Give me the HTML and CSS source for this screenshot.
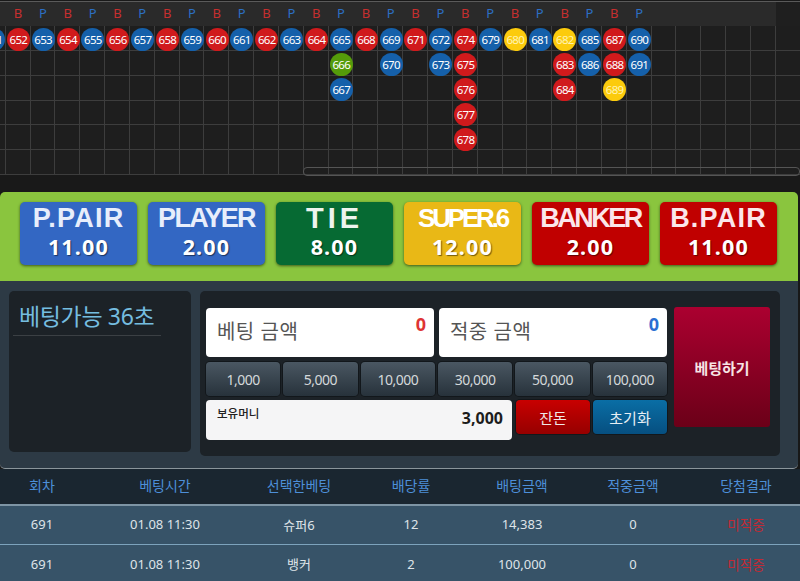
FILE: index.html
```html
<!DOCTYPE html>
<html lang="ko">
<head>
<meta charset="utf-8">
<title>베팅</title>
<link rel="stylesheet" href="styles.css">
</head>
<body>
<section class="road">
  <div class="road-inner">
    <div class="heads">
      <span class="h p">P</span><span class="h b">B</span><span class="h p">P</span><span class="h b">B</span><span class="h p">P</span><span class="h b">B</span><span class="h p">P</span><span class="h b">B</span><span class="h p">P</span><span class="h b">B</span><span class="h p">P</span><span class="h b">B</span><span class="h p">P</span><span class="h b">B</span><span class="h p">P</span><span class="h b">B</span><span class="h p">P</span><span class="h b">B</span><span class="h p">P</span><span class="h b">B</span><span class="h p">P</span><span class="h b">B</span><span class="h p">P</span><span class="h b">B</span><span class="h p">P</span><span class="h b">B</span><span class="h p">P</span>
    </div>
    <div class="board">
      <div class="col"><i class="bead blue">651</i></div>
      <div class="col"><i class="bead red">652</i></div>
      <div class="col"><i class="bead blue">653</i></div>
      <div class="col"><i class="bead red">654</i></div>
      <div class="col"><i class="bead blue">655</i></div>
      <div class="col"><i class="bead red">656</i></div>
      <div class="col"><i class="bead blue">657</i></div>
      <div class="col"><i class="bead red">658</i></div>
      <div class="col"><i class="bead blue">659</i></div>
      <div class="col"><i class="bead red">660</i></div>
      <div class="col"><i class="bead blue">661</i></div>
      <div class="col"><i class="bead red">662</i></div>
      <div class="col"><i class="bead blue">663</i></div>
      <div class="col"><i class="bead red">664</i></div>
      <div class="col"><i class="bead blue">665</i><i class="bead green">666</i><i class="bead blue">667</i></div>
      <div class="col"><i class="bead red">668</i></div>
      <div class="col"><i class="bead blue">669</i><i class="bead blue">670</i></div>
      <div class="col"><i class="bead red">671</i></div>
      <div class="col"><i class="bead blue">672</i><i class="bead blue">673</i></div>
      <div class="col"><i class="bead red">674</i><i class="bead red">675</i><i class="bead red">676</i><i class="bead red">677</i><i class="bead red">678</i></div>
      <div class="col"><i class="bead blue">679</i></div>
      <div class="col"><i class="bead yellow">680</i></div>
      <div class="col"><i class="bead blue">681</i></div>
      <div class="col"><i class="bead yellow">682</i><i class="bead red">683</i><i class="bead red">684</i></div>
      <div class="col"><i class="bead blue">685</i><i class="bead blue">686</i></div>
      <div class="col"><i class="bead red">687</i><i class="bead red">688</i><i class="bead yellow">689</i></div>
      <div class="col"><i class="bead blue">690</i><i class="bead blue">691</i></div>
      <div class="col"></div><div class="col"></div><div class="col"></div><div class="col"></div><div class="col"></div><div class="col"></div><div class="col"></div>
    </div>
  </div>
  <div class="scrollbar"></div>
</section>

<section class="odds">
  <button class="odd o-blue"><b class="odd-name pair">P.PAIR</b><span class="odd-val">11.00</span></button>
  <button class="odd o-blue"><b class="odd-name tight">PLAYER</b><span class="odd-val">2.00</span></button>
  <button class="odd o-green"><b class="odd-name wide">TIE</b><span class="odd-val">8.00</span></button>
  <button class="odd o-yellow"><b class="odd-name super">SUPER.6</b><span class="odd-val">12.00</span></button>
  <button class="odd o-red"><b class="odd-name tighter">BANKER</b><span class="odd-val">2.00</span></button>
  <button class="odd o-red"><b class="odd-name pair">B.PAIR</b><span class="odd-val">11.00</span></button>
</section>

<section class="panel">
  <div class="timer"><h2 class="timer-title">베팅가능 36초</h2></div>
  <div class="bet">
    <div class="bet-main">
      <div class="amounts">
        <div class="amount"><span class="amount-label">베팅 금액</span><b class="amount-num red-num">0</b></div>
        <div class="amount"><span class="amount-label">적중 금액</span><b class="amount-num blue-num">0</b></div>
      </div>
      <div class="chips">
        <button class="chip">1,000</button>
        <button class="chip">5,000</button>
        <button class="chip">10,000</button>
        <button class="chip">30,000</button>
        <button class="chip">50,000</button>
        <button class="chip">100,000</button>
      </div>
      <div class="balance-row">
        <div class="balance"><span class="balance-label">보유머니</span><b class="balance-num">3,000</b></div>
        <button class="act act-red">잔돈</button>
        <button class="act act-blue">초기화</button>
      </div>
    </div>
    <button class="submit">베팅하기</button>
  </div>
</section>

<section class="history">
  <div class="tr th"><span>회차</span><span>베팅시간</span><span>선택한베팅</span><span>배당률</span><span>배팅금액</span><span>적중금액</span><span>당첨결과</span></div>
  <div class="tr td"><span>691</span><span>01.08 11:30</span><span>슈퍼6</span><span>12</span><span>14,383</span><span>0</span><span class="miss">미적중</span></div>
  <div class="tr td"><span>691</span><span>01.08 11:30</span><span>뱅커</span><span>2</span><span>100,000</span><span>0</span><span class="miss">미적중</span></div>
</section>
</body>
</html>
```
FILE: styles.css
```css
* { box-sizing: border-box; }
html, body { margin: 0; height: 581px; overflow: hidden; }
body {
  background: #181818;
  font-family: "Noto Sans", "Noto Sans CJK KR", sans-serif;
  color: #fff;
}
button { font-family: inherit; border: 0; padding: 0; }

/* road */
.road { position: relative; height: 192px; background: #191919; overflow: hidden; }
.road-inner { margin-left: -19.2px; width: 830px; border-top: 1px solid #5a5a5a; margin-top: 1px; }
.heads {
  display: grid;
  grid-template-columns: repeat(27, 24.85px);
  height: 24px;
  background: linear-gradient(#2a2a2a, #2a2a2a) 0 0 / 795px 100% no-repeat, #1f1f1f;
  align-items: center;
}
.h { font-size: 13px; text-align: center; line-height: 24px; margin-top: -2px; }
.h.b { color: #c62f2f; }
.h.p { color: #2c6fc4; }
.board {
  display: grid;
  grid-template-columns: repeat(34, 24.85px);
  height: 149.3px;
  background: repeating-linear-gradient(#1e1e1e 0, #1e1e1e 23.85px, #3d3d3d 23.85px, #3d3d3d 24.85px);
}
.col { display: flex; flex-direction: column; border-right: 1px solid #3d3d3d; padding-top: 2.2px; }
.bead {
  flex: none;
  width: 23px;
  height: 23px;
  margin-bottom: 1.85px;
  margin-left: 1.2px;
  border-radius: 50%;
  font-style: normal;
  font-size: 11.5px;
  letter-spacing: -0.7px;
  line-height: 23px;
  text-align: center;
  color: #fff;
}
.bead.red { background: #d01a1c; }
.bead.blue { background: #1560aa; }
.bead.green { background: #559c0a; }
.bead.yellow { background: #fccb0c; color: #fff3b0; }
.scrollbar {
  position: absolute;
  left: 303px;
  top: 167px;
  width: 497px;
  height: 9px;
  border: 1px solid #555;
  border-radius: 4px;
}

/* odds */
.odds {
  width: 798px;
  height: 89px;
  background: #8ac53e;
  border-radius: 5px 5px 0 0;
  padding: 10px 0 0 20px;
  display: flex;
  gap: 11px;
  align-items: flex-start;
}
.odd {
  width: 117px;
  height: 63px;
  border-radius: 5px;
  color: #fff;
  display: flex;
  flex-direction: column;
  align-items: center;
  box-shadow: 0 1px 3px rgba(0,0,0,.55);
}
.o-blue { background: #3367c3; }
.o-green { background: #066a33; }
.o-yellow { background: #e9b816; }
.o-red { background: #c00000; }
.odd-name {
  font-family: "Liberation Sans", sans-serif;
  font-size: 27px;
  line-height: 30px;
  margin-top: 1px;
  color: #e8eefb;
}
.o-red .odd-name { color: #fbe6ea; }
.o-yellow .odd-name { color: #fff; }
.pair { letter-spacing: 1.2px; }
.tight { letter-spacing: -1.7px; }
.tighter { letter-spacing: -2.5px; }
.super { font-size: 26px; letter-spacing: -3.2px; }
.wide { font-size: 29px; letter-spacing: 4px; color: #eef4ee; }
.odd-val {
  font-weight: 700;
  font-size: 21.5px;
  line-height: 26px;
  margin-top: 1px;
  letter-spacing: 1.2px;
  text-shadow: 1px 1px 1px rgba(0,0,0,.5);
}

/* panel */
.panel {
  width: 798px;
  height: 188px;
  background: #2d3a45;
  border-bottom: 1px solid #8b959b;
  border-radius: 0 0 5px 5px;
  padding: 10px 18px 0 9px;
  display: flex;
  gap: 9px;
  align-items: flex-start;
}
.timer {
  width: 182px;
  height: 161px;
  background: #1c2227;
  border-radius: 5px;
  padding: 12px 0 0 4px;
}
.timer-title {
  margin: 0;
  width: 148px;
  font-size: 23px;
  font-weight: 400;
  line-height: 26px;
  height: 33px;
  padding-left: 6px;
  color: #75bde0;
  border-bottom: 1px solid #3b4044;
  letter-spacing: -0.35px;
  white-space: nowrap;
}
.bet {
  width: 580px;
  height: 165px;
  background: #1c2227;
  border-radius: 5px;
  padding: 16px 10px 0 6px;
  display: flex;
  gap: 7px;
  align-items: flex-start;
}
.bet-main { width: 461px; display: flex; flex-direction: column; }
.amounts { display: flex; gap: 5px; margin-top: 1px; }
.amount {
  flex: 1;
  height: 49px;
  background: #fff;
  border-radius: 4px;
  padding: 0 8px 0 11px;
  display: flex;
  justify-content: space-between;
}
.amount-label {
  font-family: "Noto Sans CJK KR", sans-serif;
  font-size: 20px;
  line-height: 46px;
  color: #555;
  letter-spacing: 0.4px;
}
.amount-num { font-size: 18px; line-height: 20px; margin-top: 6px; }
.red-num { color: #de3434; }
.blue-num { color: #2a6fd2; }
.chips { display: grid; grid-template-columns: repeat(6, 1fr); gap: 3px; margin-top: 5px; }
.chip {
  height: 34px;
  border-radius: 4px;
  font-size: 14px;
  letter-spacing: -0.5px;
  color: #d4d8da;
  background: linear-gradient(#4a5762, #27323b);
  box-shadow: 0 0 0 1px #12171b;
}
.balance-row { display: flex; gap: 3px; margin-top: 4px; align-items: flex-start; }
.balance {
  width: 306px;
  height: 40px;
  margin-right: 1px;
  background: #f5f5f6;
  border-radius: 4px;
  padding: 4px 9px 0 11px;
  display: flex;
  justify-content: space-between;
  color: #222;
}
.balance-label { font-family: "Noto Sans CJK KR", sans-serif; font-size: 11.5px; font-weight: 500; line-height: 18px; }
.balance-num { font-size: 16px; line-height: 28px; color: #1c1c1c; }
.act {
  flex: 1;
  height: 34px;
  border-radius: 4px;
  font-family: "Noto Sans CJK KR", sans-serif;
  font-size: 15px;
  color: #f0e8e8;
  box-shadow: 0 0 0 1px #12171b;
}
.act-red { background: linear-gradient(#c80000, #960000); }
.act-blue { background: linear-gradient(#0a6ea5, #064f80); color: #e6eef4; }
.submit {
  width: 96px;
  height: 120px;
  border-radius: 3px;
  background: linear-gradient(#ab0030, #6b0018);
  color: #f7e4e4;
  font-family: "Noto Sans CJK KR", sans-serif;
  font-size: 15px;
  font-weight: 700;
}

/* history */
.history { background: #1a2630; }
.tr {
  display: grid;
  grid-template-columns: 84px 162px 106px 118px 104px 118px 108px;
  text-align: center;
  align-items: center;
}
.th { background: #1a2630; color: #4d8fd8; font-size: 14px; font-family: "Noto Sans CJK KR", sans-serif; border-bottom: 2px solid #7e95a5; height: 37px; padding-bottom: 3px; }
.td { height: 39px; background: #375368; color: #dfe4e8; font-size: 13px; border-bottom: 1px solid #7da3bc; padding-bottom: 2px; }
.td:last-child { border-bottom: 0; }
.miss { color: #c22a34; font-size: 13.5px; }
```
